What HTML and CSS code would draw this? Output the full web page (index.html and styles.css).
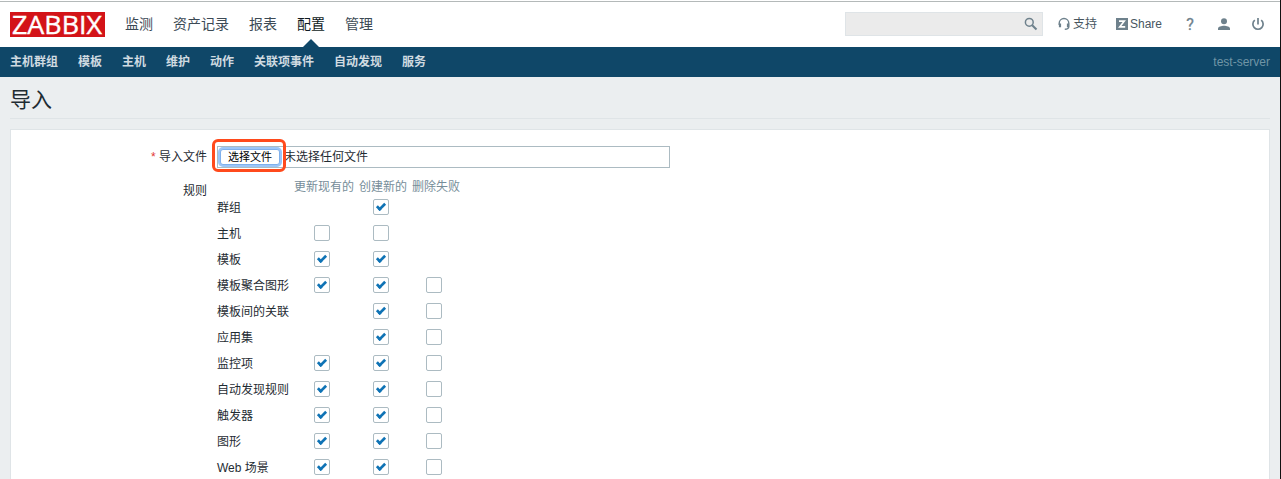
FILE: index.html
```
<!DOCTYPE html>
<html lang="zh-CN">
<head>
<meta charset="utf-8">
<title>导入</title>
<link rel="stylesheet" href="styles.css">
</head>
<body>
<div class="page">
  <header class="header">
    <a class="logo"><svg width="95" height="25" viewBox="0 0 95 25"><text class="logo-text" x="2" y="21.5" textLength="90" lengthAdjust="spacingAndGlyphs">ZABBIX</text></svg></a>
    <nav class="menu">
      <a>监测</a><a>资产记录</a><a>报表</a><a class="active">配置</a><a>管理</a>
    </nav>
    <div class="tools">
      <div class="search">
        <svg width="14" height="14" viewBox="0 0 14 14" fill="none" stroke="#6e818c"><circle cx="5.300" cy="5.300" r="3.900" stroke-width="1.500"/><path d="M8.200 8.200l4.300 4.300" stroke-width="2"/></svg>
      </div>
      <a class="support"><svg width="12" height="14" viewBox="0 0 12 14" fill="none" stroke="#6e818c"><path d="M1.200 8V6.300a4.800 4.800 0 0 1 9.600 0V9.500q0 2.700-4 2.700" stroke-width="1.400"/><path d="M2 6.500v3.700M10 6.500v3.700" stroke-width="2.200"/></svg>支持</a>
      <a class="share"><svg width="12" height="12" viewBox="0 0 12 12"><path fill="#6e818c" d="M0 0h12v12H0z"/><path d="M3 3.200h5.200L3.800 8.800H9.200" fill="none" stroke="#fff" stroke-width="1.700"/></svg>Share</a>
      <a class="help">?</a>
      <a class="user"><svg width="12" height="13" viewBox="0 0 12 13" fill="#6e818c"><circle cx="6" cy="3.300" r="3"/><path d="M0 12V10.500C0 8.700 3.500 7.700 6 7.700s6 1 6 2.800V12z"/></svg></a>
      <a class="power"><svg width="12" height="13" viewBox="0 0 12 13" fill="none" stroke="#6e818c" stroke-width="1.700"><path d="M6 0v6.500M2.800 2.200a5.100 5.100 0 1 0 6.400 0"/></svg></a>
    </div>
  </header>
  <nav class="subnav">
    <a>主机群组</a><a>模板</a><a>主机</a><a>维护</a><a>动作</a><a>关联项事件</a><a>自动发现</a><a>服务</a>
    <span class="server">test-server</span>
  </nav>
  <main class="content">
    <h1>导入</h1>
    <form class="panel">
      <div class="row">
        <label class="label"><span class="required">*</span> 导入文件</label>
        <div class="file"><button type="button" class="choose">选择文件</button><span>未选择任何文件</span></div>
      </div>
      <div class="row rules-row">
        <div class="label rules-label">规则</div>
        <div class="rules">
          <div class="rule head"><span></span><span>更新现有的</span><span>创建新的</span><span>删除失败</span></div>
          <div class="rule"><span>群组</span><i></i><i class="box on"></i><i></i></div>
          <div class="rule"><span>主机</span><i class="box"></i><i class="box"></i><i></i></div>
          <div class="rule"><span>模板</span><i class="box on"></i><i class="box on"></i><i></i></div>
          <div class="rule"><span>模板聚合图形</span><i class="box on"></i><i class="box on"></i><i class="box"></i></div>
          <div class="rule"><span>模板间的关联</span><i></i><i class="box on"></i><i class="box"></i></div>
          <div class="rule"><span>应用集</span><i></i><i class="box on"></i><i class="box"></i></div>
          <div class="rule"><span>监控项</span><i class="box on"></i><i class="box on"></i><i class="box"></i></div>
          <div class="rule"><span>自动发现规则</span><i class="box on"></i><i class="box on"></i><i class="box"></i></div>
          <div class="rule"><span>触发器</span><i class="box on"></i><i class="box on"></i><i class="box"></i></div>
          <div class="rule"><span>图形</span><i class="box on"></i><i class="box on"></i><i class="box"></i></div>
          <div class="rule"><span>Web 场景</span><i class="box on"></i><i class="box on"></i><i class="box"></i></div>
        </div>
      </div>
    </form>
  </main>
</div>
</body>
</html>
```
FILE: styles.css
```
*, *::before, *::after { box-sizing: border-box; }
body {
  margin: 0;
  overflow: hidden;
  background: #ebeef0;
  color: #1f2c33;
  font: 12px/18px "Liberation Sans", "Noto Sans CJK SC", sans-serif;
}
svg { display: block; flex: none; }
.page { height: 479px; border-right: 1px solid #111; display: flex; flex-direction: column; overflow: hidden; }

.header {
  flex: none;
  height: 47px;
  padding: 2px 16px 0 10px;
  display: flex;
  align-items: center;
  background: linear-gradient(#fff 1px, #b4b9b9 1px, #b4b9b9 2px, #fff 2px);
}
.logo { background: #d31318; margin-right: 20px; }
.logo svg { overflow: visible; }
.logo-text { font: 25px "Open Sans", sans-serif; fill: #fff; stroke: #fff; stroke-width: 0.4px; }
.menu { display: flex; gap: 20px; align-self: stretch; font-size: 14px; line-height: 45px; color: #3c4a55; }
.menu .active { position: relative; color: #0e1a22; }
.menu .active::after {
  content: "";
  position: absolute;
  left: 6px;
  bottom: 0;
  border: 8px solid transparent;
  border-top: 0;
  border-bottom-color: #0f4768;
}
.tools { margin-left: auto; padding-bottom: 1px; display: flex; align-items: center; color: #48565f; }
.tools a { display: flex; align-items: center; }
.search {
  width: 198px;
  height: 24px;
  padding-right: 4px;
  margin-right: 15px;
  display: flex;
  align-items: center;
  justify-content: flex-end;
  background: #ebebeb;
  border: 1px solid #dfe4e7;
}
.support { gap: 3px; margin-right: 19px; }
.share { gap: 2px; margin-right: 23px; }
.help { width: 10px; margin-right: 23px; justify-content: center; font: 16px Roboto, sans-serif; color: #6e818c; -webkit-text-stroke: 0.3px #6e818c; }
.user { margin-right: 22px; }

.subnav {
  flex: none;
  height: 30px;
  padding: 0 10px;
  display: flex;
  gap: 20px;
  line-height: 30px;
  font-weight: bold;
  color: #d0dbe1;
  background: #0f4768;
}
.server { margin-left: auto; font-weight: normal; color: #6f95a6; }

.content { padding: 0 10px; flex: 1; display: flex; flex-direction: column; }
h1 {
  flex: none;
  margin: 0 0 10px;
  height: 42px;
  border-bottom: 1px solid #dfe4e7;
  font-size: 21px;
  line-height: 45px;
  font-weight: normal;
}
.panel { flex: 1; background: #fff; border: 1px solid #dfe4e7; padding-top: 16px; }
.row { display: flex; gap: 10px; }
.label { width: 196px; text-align: right; line-height: 22px; }
.required { color: #e33734; }
.file {
  position: relative;
  width: 453px;
  height: 22px;
  padding: 0 2px;
  display: flex;
  align-items: center;
  gap: 4px;
  border: 1px solid #acbbc2;
}
.file::after {
  content: "";
  position: absolute;
  left: -6px;
  top: -8px;
  width: 74px;
  height: 33px;
  border: 3px solid #ff4a1c;
  border-radius: 6px;
}
.choose {
  width: 60px;
  height: 16px;
  padding: 0;
  border: 1px solid #7fb0ec;
  border-radius: 3px;
  box-shadow: 0 0 0 2px #9cc6f8;
  background: #fff;
  color: #000;
  font-family: inherit;
  font-size: 11px;
  line-height: 14px;
}
.rules-row { padding-top: 10px; }
.rules-label { line-height: 27px; }
.rule {
  display: grid;
  grid-template-columns: 72px 60px 48px 48px;
  column-gap: 5px;
  align-items: center;
  height: 26px;
  white-space: nowrap;
}
.rule > span { padding-top: 2px; }
.head { height: 16px; color: #768d99; }
.head > span { padding: 0; }
.box {
  justify-self: center;
  position: relative;
  width: 16px;
  height: 16px;
  margin-right: 4px;
  border: 1px solid #acbbc2;
  border-radius: 2px;
}
.on::after {
  content: "";
  position: absolute;
  left: 2px;
  top: 3px;
  width: 10px;
  height: 6px;
  border: solid #0f73b5;
  border-width: 0 0 3px 3px;
  transform: rotate(-45deg) scale(0.9);
}
```
